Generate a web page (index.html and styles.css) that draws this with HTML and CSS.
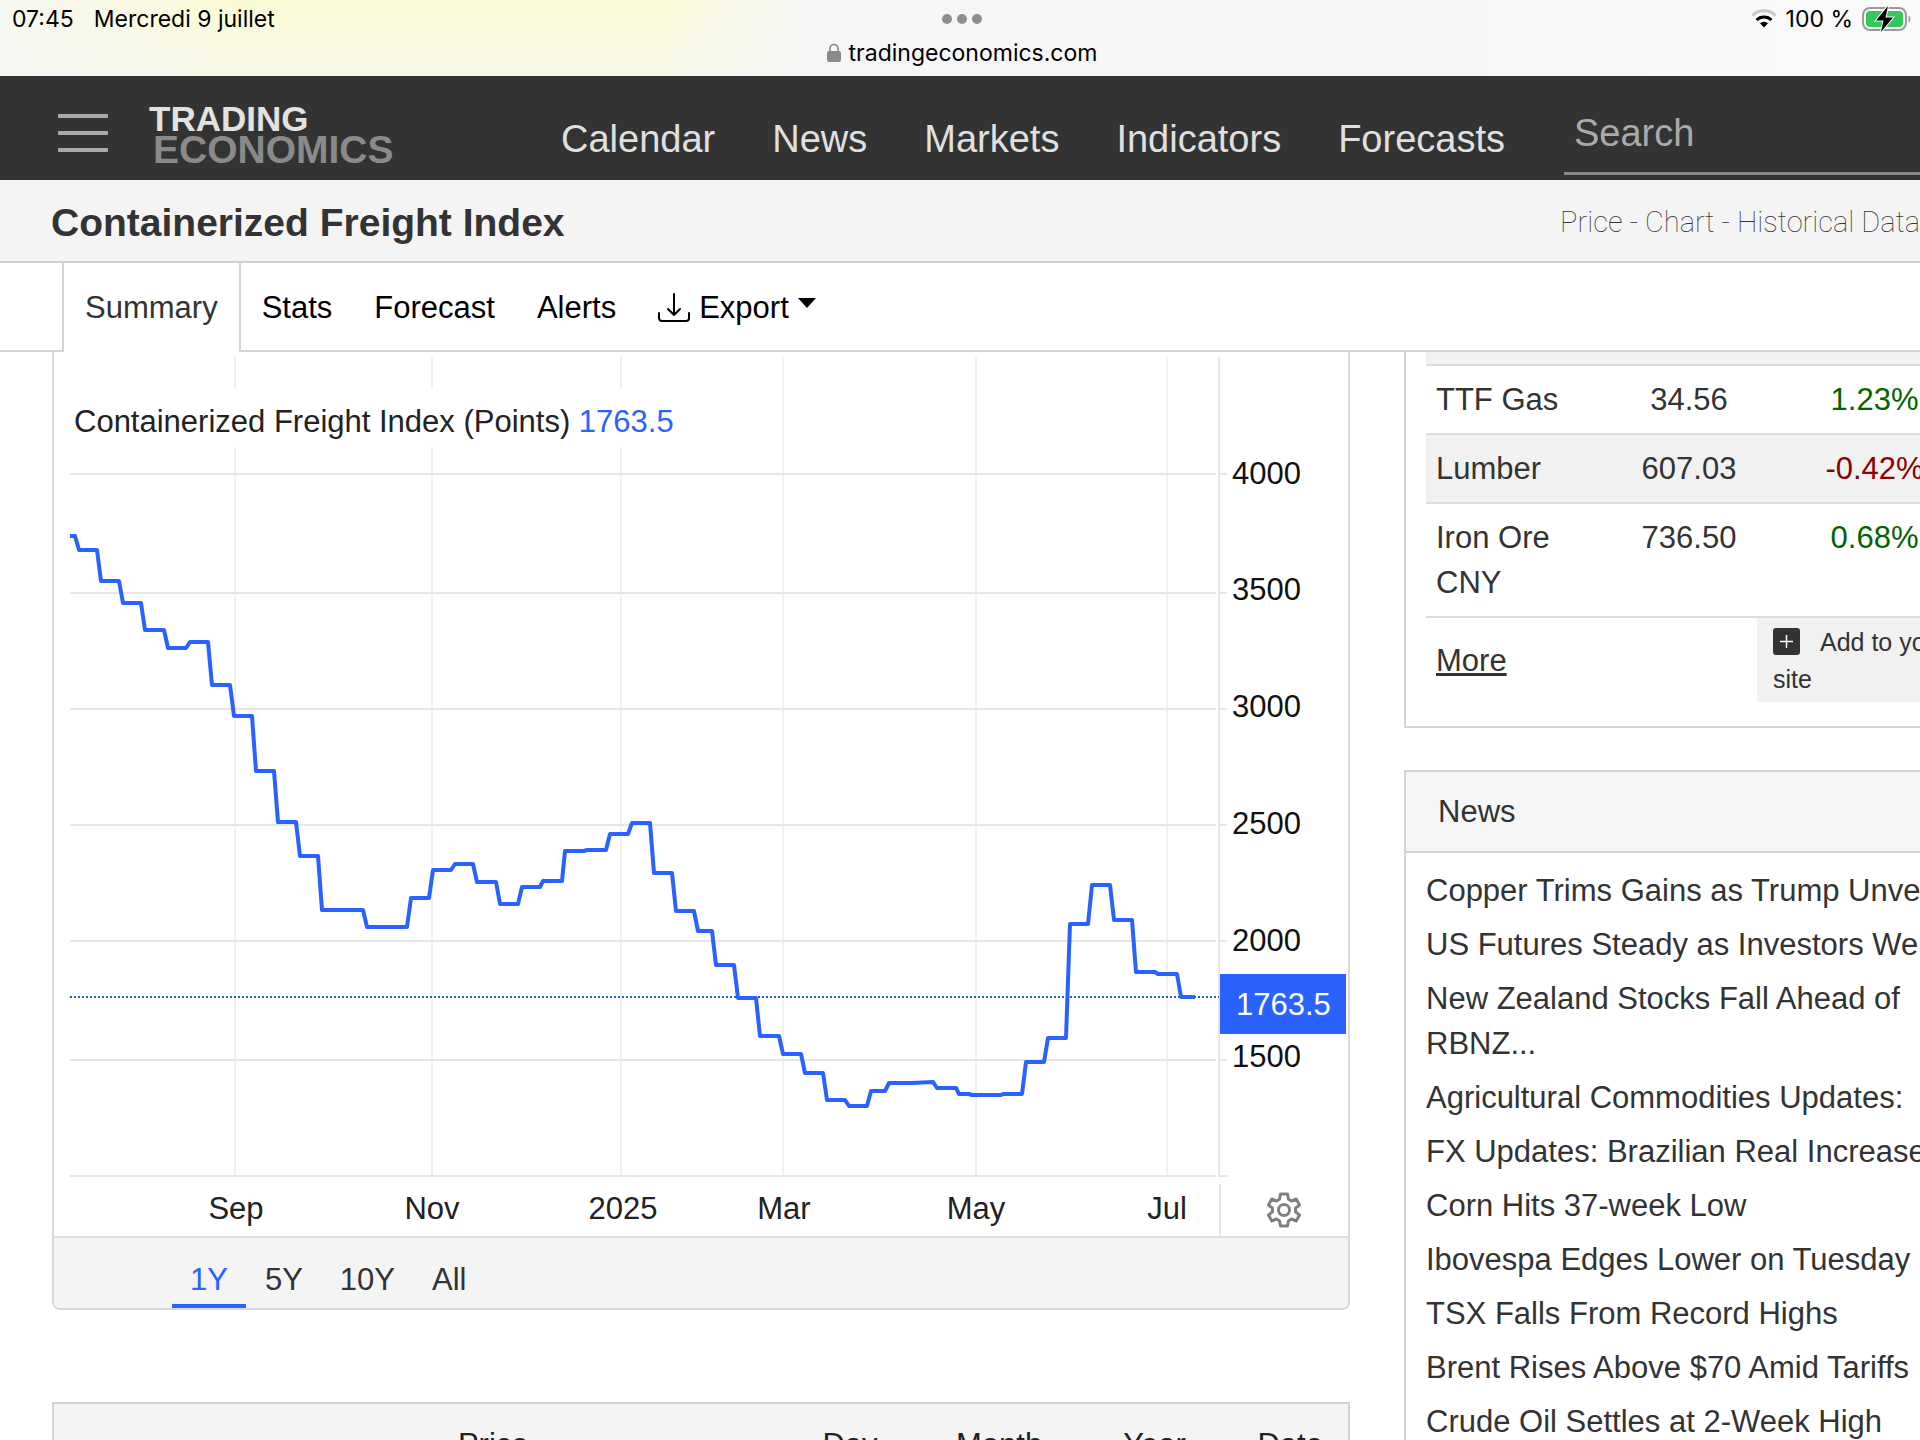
FILE: index.html
```html
<!DOCTYPE html>
<html lang="en">

<head>
    <meta charset="UTF-8">
    <title>Containerized Freight Index</title>
    <link rel="stylesheet" href="styles.css">
</head>

<body>

    <div class="status-bar">
        <div class="status-left">
            <span>07:45</span>
            <span>Mercredi 9 juillet</span>
        </div>
        <div class="status-center">
            <svg class="dots" width="42" height="12" viewBox="0 0 42 12" fill="#8e8e8e">
                <circle cx="6" cy="6" r="5" />
                <circle cx="21" cy="6" r="5" />
                <circle cx="36" cy="6" r="5" />
            </svg>
            <div class="url">
                <svg width="14" height="20" viewBox="0 0 14 20">
                    <rect x="0" y="8" width="14" height="11" rx="2" fill="#8a8a8a" />
                    <path d="M3 9V5.500a4 4 0 0 1 8 0V9" fill="none" stroke="#8a8a8a" stroke-width="1.700" />
                </svg>
                <span>tradingeconomics.com</span>
            </div>
        </div>
        <div class="status-right">
            <svg width="26" height="20" viewBox="0 0 26 20" fill="none" stroke-width="3">
                <path d="M1.500 6.500a16.500 16.500 0 0 1 23 0" stroke="#c8c8c8" />
                <path d="M5.500 11a11 11 0 0 1 15 0" stroke="#000" />
                <path d="M9 14.200a6 6 0 0 1 8 0L13 18.500z" fill="#000" />
            </svg>
            <span>100 %</span>
            <svg width="50" height="26" viewBox="0 0 50 26">
                <rect x="1" y="2" width="43" height="22" rx="7" fill="none" stroke="#9b9b9b" stroke-width="2" />
                <rect x="4" y="5" width="37" height="16" rx="4" fill="#34c759" />
                <path d="M46.500 9.500c2.500 1 2.500 6 0 7z" fill="#9b9b9b" />
                <path d="M26 0L14 14.500h7.500L19 26L31 11.500h-7.500z" fill="#000" stroke="#f8f9f8" stroke-width="2" paint-order="stroke" />
            </svg>
        </div>
    </div>

    <header class="header">
        <button class="menu-btn" aria-label="Menu">
            <i></i><i></i><i></i>
        </button>
        <a class="logo" href="#">
            <span class="logo-top">TRADING</span>
            <span class="logo-bottom">ECONOMICS</span>
        </a>
        <nav class="main-nav">
            <a href="#">Calendar</a>
            <a href="#">News</a>
            <a href="#">Markets</a>
            <a href="#">Indicators</a>
            <a href="#">Forecasts</a>
        </nav>
        <input class="search" type="text" placeholder="Search" aria-label="Search">
    </header>

    <div class="title-bar">
        <h1>Containerized Freight Index</h1>
        <h2>Price - Chart - Historical Data</h2>
    </div>

    <nav class="tabs">
        <a class="tab active" href="#">Summary</a>
        <a class="tab" href="#">Stats</a>
        <a class="tab" href="#">Forecast</a>
        <a class="tab" href="#">Alerts</a>
        <button class="tab export">
            <svg width="32" height="30" viewBox="0 0 32 30" fill="none" stroke="#000" stroke-width="2" stroke-linecap="round" stroke-linejoin="round">
                <path d="M16 1v21M10 16l6 6l6-6M1 20v5q0 3 3 3h24q3 0 3-3v-5" />
            </svg>
            Export
            <svg class="caret" width="18" height="10" viewBox="0 0 18 10">
                <path d="M0 0h18l-9 10z" />
            </svg>
        </button>
    </nav>

    <main class="page">

        <section class="content">
            <div class="chart-card">
                <svg class="chart" viewBox="54 352 1294 884">
                    <!-- vertical grid -->
                    <path class="grid-v" d="M235 357V1176M432 357V1176M621 357V1176M783 357V1176M976 357V1176M1167 357V1176" />
                    <!-- horizontal grid -->
                    <path class="grid-h" d="M70 474H1216M70 593H1216M70 709H1216M70 825H1216M70 941H1216M70 1060H1216M70 1176H1216" />
                    <path class="grid-h" d="M1219 357V1177M1220 1184V1236M1219 474h8M1219 593h8M1219 709h8M1219 825h8M1219 941h8M1219 1060h8M1219 1176h8" />

                    <rect x="70" y="389" width="620" height="58" fill="#fff" />
                    <text class="legend" x="74" y="432">Containerized Freight Index (Points) <tspan class="blue">1763.5</tspan></text>

                    <line class="last-line" x1="70" y1="997" x2="1219" y2="997" />
                    <polyline class="series" points="70,536 75,536 79,550 97,550 101,581 119,581 123,603 141,603 145,630 164,630 168,648 186,648 190,642 208,642 212,685 230,685 234,716 252,716 256,771 274,771 278,822 296,822 300,856 318,856 322,910 363,910 367,927 407,927 411,898 429,898 433,870 451,870 455,864 473,864 477,882 496,882 500,904 518,904 522,887 540,887 543,881 562,881 565,851 584,851 587,850 606,850 610,834 628,834 632,823 650,823 654,873 672,873 676,911 694,911 698,931 712,931 716,965 734,965 738,998 756,998 760,1036 779,1036 783,1054 801,1054 805,1073 823,1073 827,1100 845,1100 849,1106 867,1106 871,1091 885,1091 889,1083 912,1083 933,1082 937,1088 956,1088 959,1094 969,1094 972,1095 1001,1095 1003,1094 1022,1094 1026,1062 1044,1062 1048,1038 1066,1038 1070,924 1088,924 1092,885 1110,885 1114,920 1132,920 1136,972 1155,972 1158,974 1177,974 1181,997 1195,997" />

                    <g class="axis-y">
                        <text x="1232" y="484">4000</text>
                        <text x="1232" y="600">3500</text>
                        <text x="1232" y="717">3000</text>
                        <text x="1232" y="834">2500</text>
                        <text x="1232" y="951">2000</text>
                        <text x="1232" y="1067">1500</text>
                    </g>
                    <rect x="1220" y="974" width="126" height="60" fill="#2962ff" />
                    <text class="last-value" x="1236" y="1015">1763.5</text>

                    <g class="axis-x">
                        <text x="236" y="1219">Sep</text>
                        <text x="432" y="1219">Nov</text>
                        <text x="623" y="1219">2025</text>
                        <text x="784" y="1219">Mar</text>
                        <text x="976" y="1219">May</text>
                        <text x="1167" y="1219">Jul</text>
                    </g>

                    <!-- settings -->
                    <g class="gear" transform="translate(1284 1210)">
                        <path d="M-3.500 -16H3.500L4.500 -10.800L7.500 -9L12.200 -11L15.500 -5L11.500 -1.800V1.800L15.500 5L12.200 11L7.500 9L4.500 10.800L3.500 16H-3.500L-4.500 10.800L-7.500 9L-12.200 11L-15.500 5L-11.500 1.800V-1.800L-15.500 -5L-12.200 -11L-7.500 -9L-4.500 -10.800Z" />
                        <circle r="5.500" />
                    </g>
                </svg>
                <div class="ranges">
                    <button class="range active">1Y</button>
                    <button class="range">5Y</button>
                    <button class="range">10Y</button>
                    <button class="range">All</button>
                </div>
            </div>

            <table class="price-table">
                <thead>
                    <tr>
                        <th class="col-price">Price</th>
                        <th class="col-empty"></th>
                        <th class="col-day">Day</th>
                        <th class="col-month">Month</th>
                        <th class="col-year">Year</th>
                        <th class="col-date">Date</th>
                    </tr>
                </thead>
            </table>
        </section>

        <aside class="sidebar">
            <div class="market-card">
                <table class="market-table">
                    <tbody>
                        <tr class="cut">
                            <td></td>
                            <td></td>
                            <td></td>
                        </tr>
                        <tr>
                            <td>TTF Gas</td>
                            <td>34.56</td>
                            <td class="up">1.23%</td>
                        </tr>
                        <tr>
                            <td>Lumber</td>
                            <td>607.03</td>
                            <td class="down">-0.42%</td>
                        </tr>
                        <tr>
                            <td>Iron Ore CNY</td>
                            <td>736.50</td>
                            <td class="up">0.68%</td>
                        </tr>
                    </tbody>
                </table>
                <div class="market-footer">
                    <a href="#">More</a>
                    <button class="add-btn">
                        <svg width="27" height="27" viewBox="0 0 27 27">
                            <rect width="27" height="27" rx="3" fill="#333" />
                            <path d="M7 13.500h13M13.500 7v13" stroke="#fff" stroke-width="1.500" />
                        </svg>Add to your<br>site
                    </button>
                </div>
            </div>

            <div class="news-card">
                <h3>News</h3>
                <ul>
                    <li><a href="#">Copper Trims Gains as Trump Unveils</a></li>
                    <li><a href="#">US Futures Steady as Investors Weigh</a></li>
                    <li><a href="#">New Zealand Stocks Fall Ahead of<br>RBNZ...</a></li>
                    <li><a href="#">Agricultural Commodities Updates:</a></li>
                    <li><a href="#">FX Updates: Brazilian Real Increases</a></li>
                    <li><a href="#">Corn Hits 37-week Low</a></li>
                    <li><a href="#">Ibovespa Edges Lower on Tuesday</a></li>
                    <li><a href="#">TSX Falls From Record Highs</a></li>
                    <li><a href="#">Brent Rises Above $70 Amid Tariffs</a></li>
                    <li><a href="#">Crude Oil Settles at 2-Week High</a></li>
                </ul>
            </div>
        </aside>

    </main>

</body>

</html>
```

FILE: styles.css
```css
* {
    box-sizing: border-box;
}

body {
    margin: 0;
    height: 100vh;
    overflow: hidden;
    background-color: #fff;
    color: #333;
    font-family: "Liberation Sans", Arial, sans-serif;
    font-size: 31px;
    line-height: 45px;
}

a {
    color: inherit;
    text-decoration: none;
}

button {
    background: none;
    border: none;
    padding: 0;
    color: inherit;
    font: inherit;
    cursor: pointer;
}

h1,
h2,
h3 {
    margin: 0;
}

/* status bar */

.status-bar {
    display: grid;
    grid-template-columns: 1fr auto 1fr;
    height: 76px;
    padding: 6px 8px 0 12px;
    background: linear-gradient(to right, #f6f7f2 0%, rgba(246, 247, 242, 0) 12%, rgba(246, 246, 246, 0) 34%, #f6f6f6 42%, #f6f6f6 70%, #f9faf9 100%), linear-gradient(#fbfbd6, #f7f8e8);
    color: #000;
    font-family: Inter, sans-serif;
    font-size: 23px;
    line-height: 26px;
}

.status-left {
    display: flex;
    gap: 20px;
}

.status-center {
    display: flex;
    flex-direction: column;
    align-items: center;
    gap: 15px;
    padding-top: 7px;
}

.url {
    display: flex;
    align-items: center;
    gap: 8px;
}

.status-right {
    display: flex;
    justify-content: flex-end;
    align-items: center;
    gap: 9px;
    height: 26px;
}

/* header */

.header {
    display: flex;
    height: 104px;
    padding-left: 58px;
    background-color: #333;
    color: #e0e0e0;
    font-size: 38px;
}

.menu-btn {
    display: flex;
    flex-direction: column;
    gap: 13px;
    width: 50px;
    padding-top: 38px;
}

.menu-btn i {
    width: 100%;
    height: 4px;
    border-radius: 1px;
    background-color: #aaa;
}

.logo {
    display: flex;
    flex-direction: column;
    width: 453px;
    padding: 27px 0 0 41px;
    font-weight: bold;
}

.logo-top {
    font-size: 35px;
    line-height: 31px;
    color: #e2e2e2;
}

.logo-bottom {
    padding-left: 4px;
    font-size: 39px;
    line-height: 32px;
    color: #8a8a8a;
}

.main-nav {
    display: flex;
    gap: 57px;
    padding-top: 41px;
}

.search {
    flex: 1;
    min-width: 0;
    height: 99px;
    margin-left: 59px;
    padding: 19px 0 0 10px;
    background: none;
    border: none;
    border-bottom: 3px solid #888;
    color: #fff;
    font: inherit;
}

.search::placeholder {
    color: #aaa;
    opacity: 1;
}

/* title */

.title-bar {
    display: flex;
    justify-content: space-between;
    align-items: center;
    height: 83px;
    padding: 4px 0 0 51px;
    background-color: #f4f4f4;
    border-bottom: 2px solid #d0d0d0;
    white-space: nowrap;
}

.title-bar h1 {
    font-size: 39px;
}

.title-bar h2 {
    font-family: Roboto, sans-serif;
    font-size: 29px;
    font-weight: 100;
    color: #333;
}

/* tabs */

.tabs {
    display: flex;
    height: 89px;
    padding-left: 62px;
    border-bottom: 2px solid #d3d3d3;
    color: #000;
}

.tab {
    padding: 22px 21px 0;
}

.tab.active {
    margin-bottom: -2px;
    background-color: #fff;
    border-left: 2px solid #d3d3d3;
    border-right: 2px solid #d3d3d3;
    color: #333;
}

.export {
    display: flex;
    align-items: center;
    align-self: flex-start;
    gap: 9px;
}

.caret {
    margin-bottom: 10px;
}

/* layout, the sidebar runs past the right edge */

.page {
    display: grid;
    grid-template-columns: minmax(0, 1fr) 608px;
    gap: 54px;
    width: calc(100% + 92px);
    padding-left: 52px;
}

/* chart */

.chart-card {
    margin-bottom: 92px;
    border: 2px solid #d8d8d8;
    border-top: none;
    border-radius: 0 0 8px 8px;
    overflow: hidden;
}

.chart {
    display: block;
    width: 100%;
    font-size: 31px;
}

.grid-v,
.grid-h {
    fill: none;
    stroke: #e6e6e6;
    stroke-width: 2;
}

.grid-v {
    stroke: #f0f1f3;
}

.series {
    fill: none;
    stroke: #2962ff;
    stroke-width: 4;
    stroke-linejoin: round;
}

.last-line {
    stroke: #2757d8;
    stroke-width: 2;
    stroke-dasharray: 2 2;
}

.legend {
    fill: #222;
}

.blue {
    fill: #2962ff;
}

.axis-y {
    fill: #111;
}

.axis-x {
    fill: #222;
    text-anchor: middle;
}

.last-value {
    fill: #fff;
}

.gear {
    fill: none;
    stroke: #808080;
    stroke-width: 3;
    stroke-linejoin: round;
}

.ranges {
    display: flex;
    gap: 1px;
    height: 72px;
    padding-left: 118px;
    background-color: #f4f4f4;
    border-top: 2px solid #e0e0e0;
}

.range {
    padding: 16px 18px 0;
    border-bottom: 4px solid transparent;
}

.range.active {
    border-color: #2962ff;
    color: #2962ff;
}

/* price table */

.price-table {
    width: 100%;
    table-layout: fixed;
    border-collapse: collapse;
    border: 2px solid #d3d3d3;
    background-color: #f4f4f4;
}

.price-table th {
    padding: 18px 0;
    font-weight: normal;
    color: #222;
}

.price-table .col-price {
    width: 37%;
    padding-right: 4px;
    text-align: right;
}

.col-empty {
    width: 19%;
}

.col-day {
    width: 11%;
}

.col-month {
    width: 12%;
}

.col-year {
    width: 12%;
}

/* sidebar */

.market-card,
.news-card {
    border: 2px solid #d3d3d3;
}

.market-card {
    margin-bottom: 42px;
    padding: 0 20px 24px;
    border-top: none;
}

.market-table {
    width: 100%;
    table-layout: fixed;
    border-collapse: collapse;
}

.market-table td {
    padding: 11px 10px;
    border-bottom: 2px solid #dcdcdc;
    vertical-align: top;
    text-align: center;
}

.market-table td:first-child {
    width: 193px;
    text-align: left;
}

.market-table td:nth-child(2) {
    width: 140px;
    padding: 11px 0;
}

.market-table tr:nth-child(odd) td {
    background-color: #f1f1f1;
}

.market-table tr:nth-child(even) td,
.market-table tr:last-child td {
    background-color: #fff;
}

.market-table .cut td {
    height: 13px;
    padding: 0;
}

.market-table .up {
    color: #006400;
}

.market-table .down {
    color: #8b0000;
}

.market-footer {
    display: flex;
    align-items: flex-start;
    padding-left: 10px;
}

.market-footer a {
    width: 321px;
    padding-top: 20px;
    text-decoration: underline;
}

.add-btn {
    flex: 1;
    padding: 6px 16px 4px;
    background-color: #f1f1f1;
    text-align: left;
    font-size: 25px;
    line-height: 37px;
}

.add-btn svg {
    margin-right: 20px;
    vertical-align: -4px;
}

/* news */

.news-card h3 {
    padding: 17px 32px;
    background-color: #f6f6f6;
    border-bottom: 2px solid #d3d3d3;
    font-size: 31px;
    font-weight: normal;
}

.news-card ul {
    margin: 0;
    padding: 15px 20px;
    list-style: none;
}

.news-card li {
    padding-bottom: 9px;
}
```
